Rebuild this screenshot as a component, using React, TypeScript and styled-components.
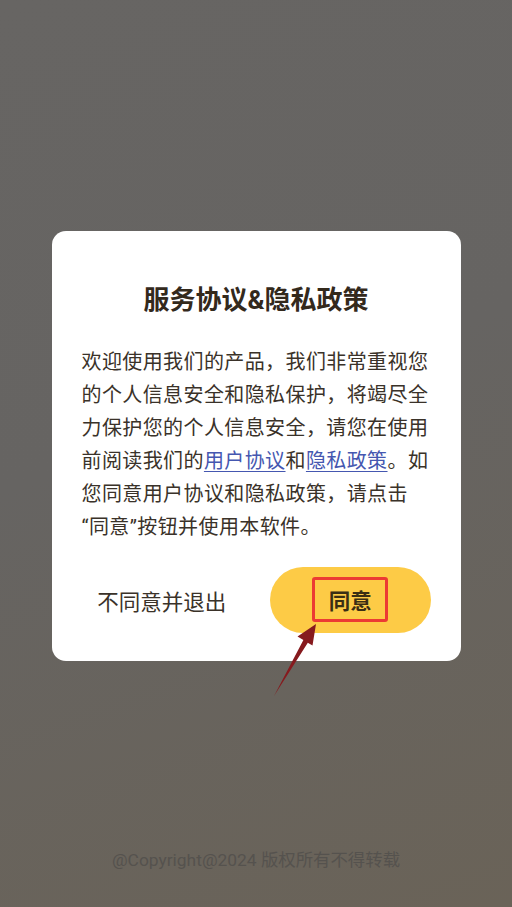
import React from "react";
import styled, { createGlobalStyle } from "styled-components";

const GlobalStyle = createGlobalStyle`
  html, body { margin: 0; padding: 0; }
  body {
    font-family: Roboto, "Noto Sans CJK SC", sans-serif;
    background: #676562;
  }
  * { box-sizing: border-box; }
`;

const Page = styled.div`
  position: relative;
  width: 512px;
  height: 907px;
  overflow: hidden;
  display: flex;
  flex-direction: column;
  align-items: center;
  padding-top: 231px;
  background: linear-gradient(160deg, #676563 0%, #666462 45%, #6a6358 100%);
`;

const Dialog = styled.div`
  width: 409px;
  background: #ffffff;
  border-radius: 14px;
  padding: 50px 30px 28px;
  display: flex;
  flex-direction: column;
`;

const Title = styled.h2`
  margin: 0;
  text-align: center;
  font-size: 26px;
  line-height: 38px;
  font-weight: 700;
  color: #33291c;
`;

const Body = styled.p`
  margin: 27px 0 0;
  font-size: 20px;
  line-height: 33px;
  letter-spacing: 0.4px;
  color: #3a3229;
`;

const Link = styled.a`
  color: #4557b0;
  text-decoration: underline;
  text-underline-offset: 3px;
  text-decoration-thickness: 1px;
`;

const Actions = styled.div`
  margin-top: 23px;
  display: flex;
  gap: 28px;
`;

const ActionButton = styled.button<{ $primary?: boolean }>`
  flex: 1;
  height: 66px;
  border: none;
  border-radius: 33px;
  font-family: Roboto, "Noto Sans CJK SC", sans-serif;
  font-size: 21.5px;
  display: flex;
  align-items: center;
  justify-content: center;
  cursor: pointer;
  background: ${(p) => (p.$primary ? "#fdcb46" : "transparent")};
  color: ${(p) => (p.$primary ? "#3a2e14" : "#3a3229")};
  font-weight: ${(p) => (p.$primary ? 700 : 400)};
  padding: 0;
`;

const Highlight = styled.span`
  display: inline-flex;
  align-items: center;
  justify-content: center;
  width: 76px;
  height: 45px;
  border: 3px solid #ec3b33;
  border-radius: 3px;
  margin-top: -2px;
`;

const Footer = styled.div`
  margin-top: auto;
  padding-bottom: 36px;
  font-size: 17.4px;
  line-height: 22px;
  color: #55524e;
`;

const Arrow = styled.svg`
  position: absolute;
  left: 0;
  top: 0;
  pointer-events: none;
`;

export default function App() {
  return (
    <>
      <GlobalStyle />
      <Page>
        <Dialog>
          <Title>服务协议&amp;隐私政策</Title>
          <Body>
            欢迎使用我们的产品，我们非常重视您的个人信息安全和隐私保护，将竭尽全力保护您的个人信息安全，请您在使用前阅读我们的
            <Link>用户协议</Link>和<Link>隐私政策</Link>
            。如您同意用户协议和隐私政策，请点击<wbr />“同意”按钮并使用本软件。
          </Body>
          <Actions>
            <ActionButton>不同意并退出</ActionButton>
            <ActionButton $primary>
              <Highlight>同意</Highlight>
            </ActionButton>
          </Actions>
        </Dialog>
        <Footer>@Copyright@2024 版权所有不得转载</Footer>
        <Arrow width="512" height="907" viewBox="0 0 512 907">
          <polygon
            points="316,624 312.5,645.5 307.8,642.8 274,696 303.4,640 297.5,636.5"
            fill="#861a1e"
          />
        </Arrow>
      </Page>
    </>
  );
}
